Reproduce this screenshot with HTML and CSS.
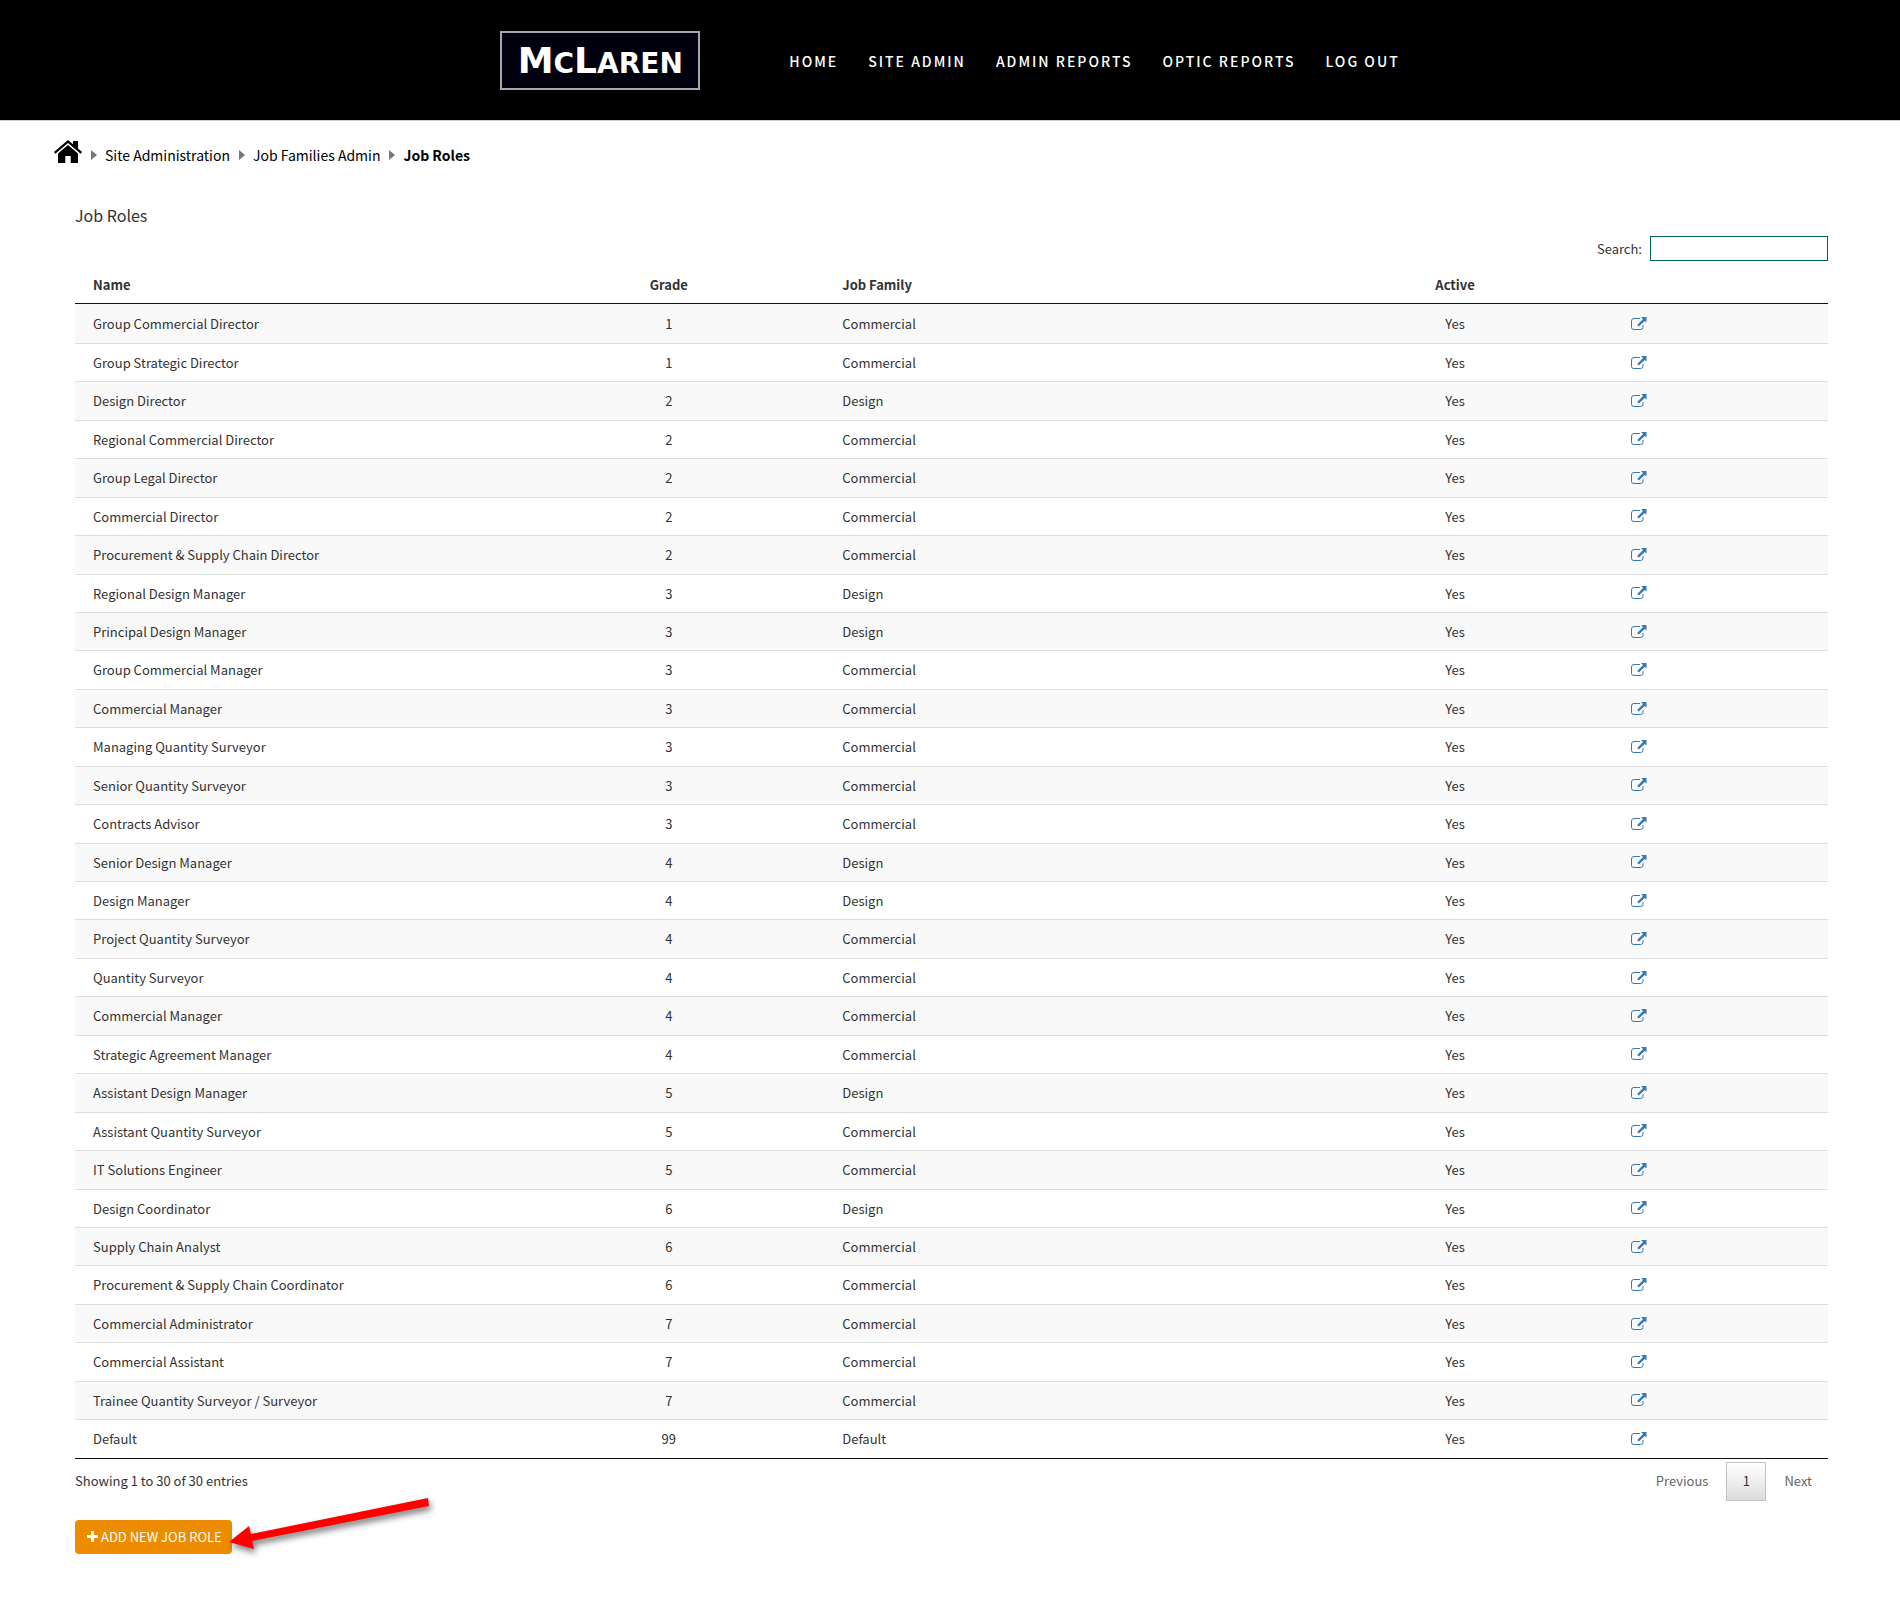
FILE: index.html
```html
<!DOCTYPE html>
<html lang="en">
<head>
  <meta charset="UTF-8">
  <title>Job Roles</title>
  <meta name="viewport" content="width=device-width, initial-scale=1.0">
  <link rel="stylesheet" href="styles.css">
</head>
<body>
  <header class="site-header">
    <a href="#" class="logo">M<small>C</small>L<small>AREN</small></a>
    <nav class="main-nav">
      <a href="#">HOME</a>
      <a href="#">SITE ADMIN</a>
      <a href="#">ADMIN REPORTS</a>
      <a href="#">OPTIC REPORTS</a>
      <a href="#">LOG OUT</a>
    </nav>
  </header>

  <nav class="breadcrumb" aria-label="Breadcrumb">
    <a href="#" class="home" aria-label="Home">
      <svg width="28" height="24" viewBox="0 0 28 24">
        <path d="M14 0 L19 4.300 V1 H24 V8.600 L28 12 L26.600 13.700 L14 3 L1.400 13.700 L0 12 Z"/>
        <path d="M14 5 L24 13.500 V23 H16.700 V16 H11.300 V23 H4 V13.500 Z"/>
      </svg>
    </a>
    <span class="arrow"></span>
    <a href="#">Site Administration</a>
    <span class="arrow"></span>
    <a href="#">Job Families Admin</a>
    <span class="arrow"></span>
    <span class="current">Job Roles</span>
  </nav>

  <main class="content">
    <h1>Job Roles</h1>

    <div class="filter">
      <label for="search">Search:</label>
      <input type="search" id="search">
    </div>

    <table class="roles">
      <colgroup>
        <col class="col-name">
        <col class="col-grade">
        <col class="col-family">
        <col class="col-active">
        <col>
      </colgroup>
      <thead>
        <tr>
          <th>Name</th>
          <th class="center">Grade</th>
          <th>Job Family</th>
          <th class="center">Active</th>
          <th></th>
        </tr>
      </thead>
      <tbody id="rolesBody"></tbody>
    </table>

    <div class="table-footer">
      <div class="info">Showing 1 to 30 of 30 entries</div>
      <div class="pagination">
        <button type="button">Previous</button>
        <button type="button" class="page">1</button>
        <button type="button">Next</button>
      </div>
    </div>

    <div class="actions">
      <button type="button" class="add-btn">
        <svg width="11" height="11" viewBox="0 0 11 11"><path d="M4 0h3v4h4v3H7v4H4V7H0V4h4z"/></svg>
        ADD NEW JOB ROLE
      </button>
      <svg class="pointer" width="220" height="76" viewBox="0 0 220 76">
        <path d="M4 48 L24 32 L26 40 L203 4 L204 12 L27 47 L29 55 Z"/>
      </svg>
    </div>
  </main>

  <script>
    const roles = [
      ['Group Commercial Director', 1, 'Commercial'],
      ['Group Strategic Director', 1, 'Commercial'],
      ['Design Director', 2, 'Design'],
      ['Regional Commercial Director', 2, 'Commercial'],
      ['Group Legal Director', 2, 'Commercial'],
      ['Commercial Director', 2, 'Commercial'],
      ['Procurement &amp; Supply Chain Director', 2, 'Commercial'],
      ['Regional Design Manager', 3, 'Design'],
      ['Principal Design Manager', 3, 'Design'],
      ['Group Commercial Manager', 3, 'Commercial'],
      ['Commercial Manager', 3, 'Commercial'],
      ['Managing Quantity Surveyor', 3, 'Commercial'],
      ['Senior Quantity Surveyor', 3, 'Commercial'],
      ['Contracts Advisor', 3, 'Commercial'],
      ['Senior Design Manager', 4, 'Design'],
      ['Design Manager', 4, 'Design'],
      ['Project Quantity Surveyor', 4, 'Commercial'],
      ['Quantity Surveyor', 4, 'Commercial'],
      ['Commercial Manager', 4, 'Commercial'],
      ['Strategic Agreement Manager', 4, 'Commercial'],
      ['Assistant Design Manager', 5, 'Design'],
      ['Assistant Quantity Surveyor', 5, 'Commercial'],
      ['IT Solutions Engineer', 5, 'Commercial'],
      ['Design Coordinator', 6, 'Design'],
      ['Supply Chain Analyst', 6, 'Commercial'],
      ['Procurement &amp; Supply Chain Coordinator', 6, 'Commercial'],
      ['Commercial Administrator', 7, 'Commercial'],
      ['Commercial Assistant', 7, 'Commercial'],
      ['Trainee Quantity Surveyor / Surveyor', 7, 'Commercial'],
      ['Default', 99, 'Default']
    ];

    const openIcon = `<svg width="16" height="14" viewBox="0 0 16 14">
      <path class="box" d="M9 1.500 H3 Q0.500 1.500 0.500 4 V10.500 Q0.500 12.500 3 12.500 H9.500 Q12 12.500 12 10.500 V8"/>
      <path class="out" d="M10 0 H15.500 V5.500 L13.700 3.900 L7.800 9.600 L6.200 8 L12 2 Z"/>
    </svg>`;

    document.getElementById('rolesBody').innerHTML = roles.map(([name, grade, family]) => `
      <tr>
        <td>${name}</td>
        <td class="center">${grade}</td>
        <td>${family}</td>
        <td class="center">Yes</td>
        <td><a href="#" class="open" aria-label="Open">${openIcon}</a></td>
      </tr>`).join('');
  </script>
</body>
</html>
```

FILE: styles.css
```css
* {
  box-sizing: border-box;
}

body {
  margin: 0;
  font-family: "Noto Sans CJK SC", "Noto Sans", sans-serif;
  font-size: 13px;
  line-height: 20px;
  color: #333;
  background: #fff;
}

a {
  color: inherit;
  text-decoration: none;
}

button,
input {
  font: inherit;
}

.site-header {
  display: flex;
  justify-content: center;
  align-items: center;
  gap: 89px;
  height: 121px;
  background: #000;
  border-bottom: 1px solid #ccc;
}

.logo {
  display: flex;
  justify-content: center;
  align-items: baseline;
  width: 200px;
  height: 59px;
  border: 2px solid #a5a5ad;
  background: #00000f;
  color: #fff;
  font-family: "DejaVu Sans", sans-serif;
  font-size: 36px;
  font-weight: bold;
  line-height: 55px;
}

.logo small {
  font-size: 28px;
}

.main-nav {
  display: flex;
  gap: 30px;
  padding-top: 2px;
  color: #fff;
  font-size: 14px;
  font-weight: 500;
  letter-spacing: 2px;
}

.breadcrumb {
  display: flex;
  align-items: center;
  padding: 19px 54px 0;
  font-size: 14px;
  color: #000;
}

.breadcrumb .home {
  height: 30px;
}

.breadcrumb .home svg {
  display: block;
}

.breadcrumb .arrow {
  margin: 0 8px 0 9px;
  border: 5px solid transparent;
  border-left: 6px solid #777;
  border-right: 0;
}

.breadcrumb .current {
  font-weight: bold;
}

.content {
  padding: 31px 72px 48px 75px;
}

h1 {
  margin: 0 0 7px;
  font-size: 16px;
  font-weight: normal;
  line-height: 28px;
}

.filter {
  display: flex;
  justify-content: flex-end;
  align-items: center;
  gap: 8px;
}

.filter input {
  width: 178px;
  height: 25px;
  padding: 0 4px;
  border: 1px solid #006450;
  background: #fff;
  outline: none;
  appearance: none;
}

.roles {
  width: 100%;
  margin-top: 5px;
  table-layout: fixed;
  border-collapse: separate;
  border-spacing: 0;
  border-bottom: 1px solid #111;
  line-height: 1.65;
}

.col-name {
  width: 25%;
}

.col-grade {
  width: 311px;
}

.col-family {
  width: 27%;
}

.col-active {
  width: 315px;
}

.roles th,
.roles td {
  text-align: left;
}

.roles th {
  padding: 8px 18px;
  border-bottom: 1px solid #111;
}

.roles td {
  padding: 8px 18px;
  border-top: 1px solid #ddd;
}

.roles .center {
  text-align: center;
}

.roles tbody tr:first-child td {
  border-top-color: #f9f9f9;
}

.roles tbody tr:nth-child(odd) {
  background: #f9f9f9;
}

.open svg {
  display: block;
}

.open .box {
  fill: none;
  stroke: #337ab7;
}

.open .out {
  fill: #337ab7;
}

.table-footer {
  display: flex;
  justify-content: space-between;
  align-items: flex-start;
  padding-top: 3px;
}

.info {
  padding-top: 9px;
}

.pagination {
  display: flex;
  gap: 2px;
}

.pagination button {
  height: 39px;
  padding: 0 15px;
  border: 1px solid transparent;
  background: none;
  color: #666;
}

.pagination .page {
  width: 40px;
  border-color: #c4c4c4;
  background: linear-gradient(#fff, #dcdcdc);
  color: #333;
}

.actions {
  position: relative;
  margin-top: 19px;
}

.add-btn {
  display: flex;
  align-items: center;
  gap: 3px;
  height: 34px;
  padding: 0 10px 0 12px;
  border: 0;
  border-radius: 4px;
  background: #ee8c00;
  color: #fff;
}

.add-btn svg {
  fill: #fff;
}

/* callout arrow over the add button */
.pointer {
  position: absolute;
  left: 150px;
  top: -26px;
  fill: #f00;
  filter: drop-shadow(2px 4px 3px rgba(0, 0, 0, 0.5));
}
```
